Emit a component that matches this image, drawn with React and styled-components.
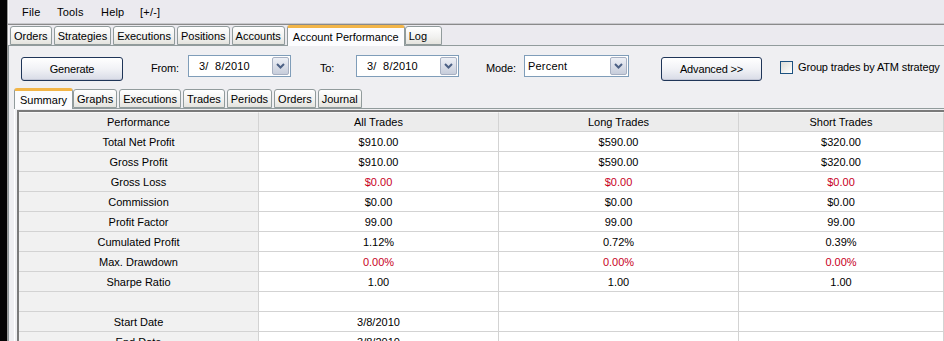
import React from 'react'
import styled, { createGlobalStyle } from 'styled-components'

const GlobalStyle = createGlobalStyle`
  html, body {
    margin: 0;
    padding: 0;
    background: #000;
    overflow: hidden;
  }
  body {
    font-family: "Liberation Sans", Arial, sans-serif;
    font-size: 11px;
    color: #000;
  }
`

const Screen = styled.div`
  display: flex;
  width: 944px;
  height: 341px;
  overflow: hidden;
`

const DesktopEdge = styled.div`
  width: 7px;
  flex-shrink: 0;
  background: #050505;
`

const Window = styled.div`
  flex: 1;
  display: flex;
  flex-direction: column;
  background: #ebeaef;
  border-left: 1px solid #9a9a9a;
  box-shadow: inset 1px 0 0 #f6f6f6;
  min-width: 0;
`

const MenuBar = styled.div`
  display: flex;
  align-items: center;
  height: 23px;
  padding-left: 14px;
  border-bottom: 1px solid #c8c8cc;
  box-shadow: 0 1px 0 #8a8a8a;
  margin-bottom: 1px;
`

const MenuItem = styled.span`
  width: ${(p) => (p.$w ? `${p.$w}px` : 'auto')};
  font-size: 11px;
  letter-spacing: 0.2px;
`

const TopTabs = styled.div`
  display: flex;
  align-items: flex-end;
  height: 20px;
  padding-left: 2px;
`

const Tab = styled.div`
  height: ${(p) => (p.$active ? 21 : 19)}px;
  min-width: ${(p) => p.$minW || 0}px;
  box-sizing: border-box;
  padding: 0 ${(p) => (p.$active ? 5 : 3)}px;
  margin-right: ${(p) => (p.$active ? 0 : 2)}px;
  display: flex;
  align-items: center;
  border: 1px solid #919b9c;
  border-bottom: ${(p) => (p.$active ? 'none' : '1px solid #919b9c')};
  border-top: ${(p) => (p.$active ? '3px solid #f2b548' : '1px solid #919b9c')};
  border-radius: 3px 3px 0 0;
  background: ${(p) =>
    p.$active ? '#fcfcfe' : 'linear-gradient(#ffffff, #f1f1ef 60%, #e4e3de)'};
  position: relative;
  z-index: ${(p) => (p.$active ? 2 : 1)};
  margin-bottom: ${(p) => (p.$active ? -1 : 0)}px;
  white-space: nowrap;
  font-size: 11px;
`

const Panel = styled.div`
  flex: 1;
  display: flex;
  flex-direction: column;
  border-top: 1px solid #919b9c;
  border-left: 1px solid #919b9c;
  background: #efeff2;
  min-height: 0;
`

const Toolbar = styled.div`
  display: flex;
  align-items: center;
  height: 26px;
  margin-top: 8px;
  padding-left: 12px;
  font-size: 11px;
  letter-spacing: -0.15px;
`

const Button = styled.div`
  width: ${(p) => p.$w}px;
  height: 24px;
  box-sizing: border-box;
  margin-left: ${(p) => p.$ml || 0}px;
  margin-top: 4px;
  display: flex;
  align-items: center;
  justify-content: center;
  border: 1px solid #1f3558;
  border-radius: 3px;
  background: linear-gradient(#ffffff, #f1f2f6 50%, #d8dbe6);
  box-shadow: inset 0 -1px 0 #c3c7d6;
`

const Label = styled.span`
  width: ${(p) => p.$w}px;
  margin-left: ${(p) => p.$ml}px;
  margin-top: 2px;
`

const Combo = styled.div`
  width: ${(p) => p.$w}px;
  height: 22px;
  box-sizing: border-box;
  display: flex;
  align-items: center;
  border: 1px solid #7f9db9;
  background: #fff;
  padding: 1px;
  margin-top: -3px;
`

const ComboText = styled.span`
  flex: 1;
  padding-left: ${(p) => p.$pl}px;
  letter-spacing: 0.2px;
`

const DropButton = styled.div`
  width: 17px;
  height: 18px;
  box-sizing: border-box;
  border: 1px solid #a7b0c2;
  border-radius: 2px;
  background: linear-gradient(#eef0f6, #c7cddb);
  display: flex;
  align-items: center;
  justify-content: center;
`

const Check = styled.div`
  width: 13px;
  height: 13px;
  box-sizing: border-box;
  margin-left: 18px;
  border: 1px solid #1c5180;
  background: linear-gradient(135deg, #dcdcd7, #fff);
  margin-top: 1px;
`

const CheckLabel = styled.span`
  margin-left: 5px;
  margin-top: -1px;
  white-space: nowrap;
`

const InnerTabs = styled.div`
  display: flex;
  align-items: flex-end;
  height: 20px;
  margin-top: 8px;
  padding-left: 5px;
`

const InnerPanel = styled.div`
  flex: 1;
  margin-left: 5px;
  border-top: 1px solid #919b9c;
  border-left: 1px solid #ffffff;
  background: #efeff2;
  padding: 1px 0 0 2px;
  min-height: 0;
`

const Grid = styled.div`
  display: grid;
  grid-template-columns: 240px 240px 240px 1fr;
  border-top: 2px solid #7a7a7a;
  border-left: 2px solid #7a7a7a;
  background: #fff;
  height: 100%;
`

const Cell = styled.div`
  height: 20px;
  box-sizing: border-box;
  display: flex;
  align-items: center;
  justify-content: center;
  border-right: 1px solid #d3d3d3;
  border-bottom: 1px solid #d3d3d3;
  background: ${(p) => (p.$head ? '#ececec' : p.$side ? '#f1f1f1' : '#ffffff')};
  color: ${(p) => (p.$red ? '#c8001e' : '#000')};
  font-size: 11px;
  white-space: nowrap;
  ${(p) => p.$head && 'border-top: 1px solid #f8f8f8;'}
`

const Chevron = () => (
  <svg width="9" height="6" viewBox="0 0 9 6">
    <path d="M1 1 L4.5 4.5 L8 1" fill="none" stroke="#4d6185" strokeWidth="2" />
  </svg>
)

const rows = [
  ['Total Net Profit', '$910.00', '$590.00', '$320.00'],
  ['Gross Profit', '$910.00', '$590.00', '$320.00'],
  ['Gross Loss', '$0.00', '$0.00', '$0.00', true],
  ['Commission', '$0.00', '$0.00', '$0.00'],
  ['Profit Factor', '99.00', '99.00', '99.00'],
  ['Cumulated Profit', '1.12%', '0.72%', '0.39%'],
  ['Max. Drawdown', '0.00%', '0.00%', '0.00%', true],
  ['Sharpe Ratio', '1.00', '1.00', '1.00'],
  ['', '', '', ''],
  ['Start Date', '3/8/2010', '', ''],
  ['End Date', '3/8/2010', '', ''],
]

const topTabs = ['Orders', 'Strategies', 'Executions', 'Positions', 'Accounts']
const innerTabs = ['Graphs', 'Executions', 'Trades', 'Periods', 'Orders', 'Journal']

export default function App() {
  return (
    <Screen>
      <GlobalStyle />
      <DesktopEdge />
      <Window>
        <MenuBar>
          <MenuItem $w={35}>File</MenuItem>
          <MenuItem $w={44}>Tools</MenuItem>
          <MenuItem $w={39}>Help</MenuItem>
          <MenuItem>[+/-]</MenuItem>
        </MenuBar>
        <TopTabs>
          {topTabs.map((t) => (
            <Tab key={t}>{t}</Tab>
          ))}
          <Tab $active>Account Performance</Tab>
          <Tab $minW={37}>Log</Tab>
        </TopTabs>
        <Panel>
          <Toolbar>
            <Button $w={102}>Generate</Button>
            <Label $ml={28} $w={37}>From:</Label>
            <Combo $w={103}>
              <ComboText $pl={9}>3/&nbsp; 8/2010</ComboText>
              <DropButton><Chevron /></DropButton>
            </Combo>
            <Label $ml={29} $w={36}>To:</Label>
            <Combo $w={103}>
              <ComboText $pl={9}>3/&nbsp; 8/2010</ComboText>
              <DropButton><Chevron /></DropButton>
            </Combo>
            <Label $ml={27} $w={38}>Mode:</Label>
            <Combo $w={105}>
              <ComboText $pl={2}>Percent</ComboText>
              <DropButton><Chevron /></DropButton>
            </Combo>
            <Button $w={101} $ml={32}>Advanced &gt;&gt;</Button>
            <Check />
            <CheckLabel>Group trades by ATM strategy</CheckLabel>
          </Toolbar>
          <InnerTabs>
            <Tab $active>Summary</Tab>
            {innerTabs.map((t) => (
              <Tab key={t}>{t}</Tab>
            ))}
          </InnerTabs>
          <InnerPanel>
            <Grid>
              <Cell $head>Performance</Cell>
              <Cell $head>All Trades</Cell>
              <Cell $head>Long Trades</Cell>
              <Cell $head>Short Trades</Cell>
              {rows.map((r, i) => (
                <React.Fragment key={i}>
                  <Cell $side>{r[0]}</Cell>
                  <Cell $red={r[4]}>{r[1]}</Cell>
                  <Cell $red={r[4]}>{r[2]}</Cell>
                  <Cell $red={r[4]}>{r[3]}</Cell>
                </React.Fragment>
              ))}
            </Grid>
          </InnerPanel>
        </Panel>
      </Window>
    </Screen>
  )
}
